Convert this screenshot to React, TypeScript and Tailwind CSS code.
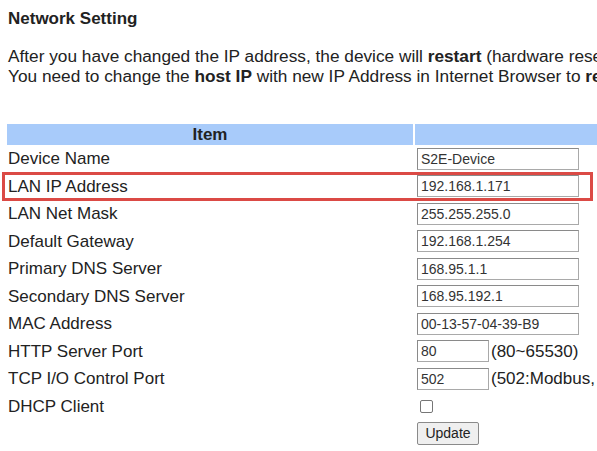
import React from 'react';

const rows = [
  { label: 'Device Name', value: 'S2E-Device' },
  { label: 'LAN IP Address', value: '192.168.1.171' },
  { label: 'LAN Net Mask', value: '255.255.255.0' },
  { label: 'Default Gateway', value: '192.168.1.254' },
  { label: 'Primary DNS Server', value: '168.95.1.1' },
  { label: 'Secondary DNS Server', value: '168.95.192.1' },
  { label: 'MAC Address', value: '00-13-57-04-39-B9' },
  { label: 'HTTP Server Port', value: '80', note: '(80~65530)' },
  { label: 'TCP I/O Control Port', value: '502', note: '(502:Modbus, others)' },
];

function App() {
  return (
    <div
      className="relative w-[597px] h-[451px] overflow-hidden bg-white text-[#222]"
      style={{ fontFamily: '"Liberation Sans", Arial, sans-serif' }}
    >
      <div className="pl-2 pt-[9px]">
        <h1 className="text-[17px] leading-[20px] font-bold">Network Setting</h1>
        <p className="mt-[17px] text-[17.25px] leading-[20px] whitespace-nowrap">
          After you have changed the IP address, the device will <b>restart</b> (hardware reset).
          <br />
          You need to change the <b>host IP</b> with new IP Address in Internet Browser to <b>reconnect</b>.
        </p>
      </div>

      {/* settings table */}
      <div className="mt-[38px] pl-[7px]">
        <div className="grid grid-cols-[406px_250px] gap-x-[2px]">
          <div className="h-[21px] bg-[#a8cbfa] flex items-center justify-center text-[17px] font-bold">Item</div>
          <div className="h-[21px] bg-[#a8cbfa]" />

          {rows.map((r) => (
            <React.Fragment key={r.label}>
              <div className="h-[27.5px] flex items-center pl-[1px] text-[17px] whitespace-nowrap">{r.label}</div>
              <div className="h-[27.5px] flex items-center pl-[2px] whitespace-nowrap">
                <input
                  readOnly
                  value={r.value}
                  className={`${r.note ? 'w-[72px]' : 'w-[162px]'} h-[22px] border border-[#a9a9a9] border-t-[#8a8a8a] border-l-[#8a8a8a] pl-[3px] text-[14px] text-[#333] outline-none bg-white`}
                />
                {r.note && <span className="pl-[2px] text-[17px]">{r.note}</span>}
              </div>
            </React.Fragment>
          ))}

          <div className="h-[27.5px] flex items-center pl-[1px] text-[17px]">DHCP Client</div>
          <div className="h-[27.5px] flex items-center pl-[5px]">
            <input
              type="checkbox"
              className="appearance-none w-[13px] h-[13px] border border-[#767676] rounded-[2px] bg-white"
            />
          </div>

          <div className="h-[27.5px]" />
          <div className="h-[27.5px] flex items-center pl-[2px]">
            <button className="w-[62px] h-[23px] bg-[#efefef] border border-[#8a8a8a] rounded-[2px] text-[14px] text-[#222]">
              Update
            </button>
          </div>
        </div>
      </div>

      {/* highlight annotation */}
      <div className="absolute left-[2px] top-[172px] w-[591px] h-[29px] border-[3px] border-[#db4a45] pointer-events-none" />
    </div>
  );
}

export default App;
